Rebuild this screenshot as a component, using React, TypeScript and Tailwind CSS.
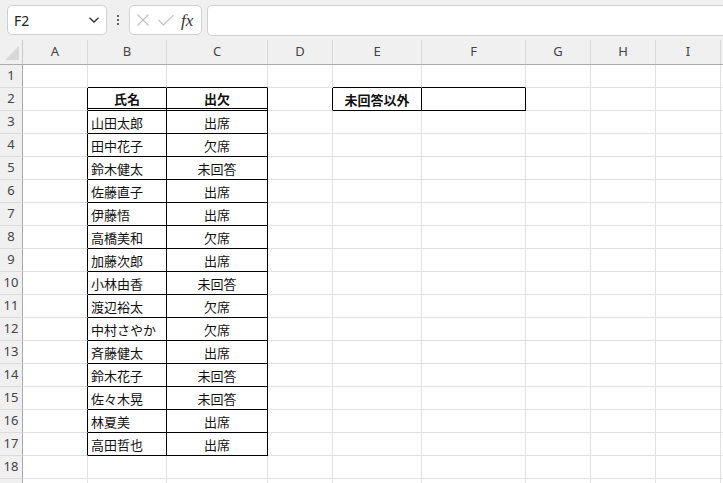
import React from "react";

const cols = [
  { l: "A", w: 65 },
  { l: "B", w: 79 },
  { l: "C", w: 101 },
  { l: "D", w: 65 },
  { l: "E", w: 89 },
  { l: "F", w: 104 },
  { l: "G", w: 65 },
  { l: "H", w: 65 },
  { l: "I", w: 65 },
  { l: "", w: 65 },
];

const data: [string, string][] = [
  ["山田太郎", "出席"],
  ["田中花子", "欠席"],
  ["鈴木健太", "未回答"],
  ["佐藤直子", "出席"],
  ["伊藤悟", "出席"],
  ["高橋美和", "欠席"],
  ["加藤次郎", "出席"],
  ["小林由香", "未回答"],
  ["渡辺裕太", "欠席"],
  ["中村さやか", "欠席"],
  ["斉藤健太", "出席"],
  ["鈴木花子", "未回答"],
  ["佐々木晃", "未回答"],
  ["林夏美", "出席"],
  ["高田哲也", "出席"],
];

const jp = { fontFamily: '"Noto Sans CJK JP", "Noto Sans", sans-serif' };
const ui = { fontFamily: '"Noto Sans", "Liberation Sans", sans-serif' };

function cellContent(r: number, c: number): { text: string; bold?: boolean; align: "left" | "center" } | null {
  if (r === 2 && c === 1) return { text: "氏名", bold: true, align: "center" };
  if (r === 2 && c === 2) return { text: "出欠", bold: true, align: "center" };
  if (r === 2 && c === 4) return { text: "未回答以外", bold: true, align: "center" };
  if (r >= 3 && r <= 17) {
    const d = data[r - 3];
    if (c === 1) return { text: d[0], align: "left" };
    if (c === 2) return { text: d[1], align: "center" };
  }
  return null;
}

function rightBlack(r: number, c: number) {
  if (r >= 2 && r <= 17 && c >= 0 && c <= 2) return true;
  if (r === 2 && c >= 3 && c <= 5) return true;
  return false;
}
function bottomBlack(r: number, c: number) {
  if (r === 1 && (c === 1 || c === 2 || c === 4 || c === 5)) return true;
  if (r >= 2 && r <= 17 && (c === 1 || c === 2)) return true;
  if (r === 2 && (c === 4 || c === 5)) return true;
  return false;
}

function Cell({ r, c, w }: { r: number; c: number; w: number }) {
  const content = cellContent(r, c);
  const rb = rightBlack(r, c);
  const bb = bottomBlack(r, c);
  const dbl = r === 2 && (c === 1 || c === 2);
  const cls = [
    "shrink-0 box-border h-full flex items-center overflow-hidden whitespace-nowrap text-[13px] text-[#111]",
    rb ? "border-r border-r-black" : "border-r border-r-[#e1e1e1]",
    dbl
      ? "border-b-[3px] border-double border-b-black"
      : bb
      ? "border-b border-b-black"
      : "border-b border-b-[#e1e1e1]",
    content?.align === "center" ? "justify-center" : "justify-start pl-[3px]",
    content?.bold ? "font-bold" : "font-normal",
  ].join(" ");
  return (
    <div className={cls} style={{ width: w }}>
      {content && <span className="pt-[1px]" style={jp}>{content.text}</span>}
    </div>
  );
}

export default function App() {
  const rows = Array.from({ length: 19 }, (_, i) => i + 1);
  return (
    <div className="w-[723px] h-[483px] overflow-hidden bg-white relative" style={ui}>
      {/* toolbar */}
      <div className="h-[40px] bg-[#f0f0f0] flex items-center">
        <div className="shrink-0 ml-[7px] w-[100px] h-[30px] bg-white border border-[#d1d1d1] rounded-[5px] flex items-center justify-between pl-[6px] pr-[6px] box-border">
          <span className="text-[14px] text-[#222]">F2</span>
          <svg width="12" height="8" viewBox="0 0 12 8">
            <path d="M1.5 1.8 L6 6 L10.5 1.8" fill="none" stroke="#333" strokeWidth="1.3" />
          </svg>
        </div>
        <div className="shrink-0 w-[22px] flex flex-col items-center justify-center gap-[2px]">
          <div className="w-[2px] h-[2px] bg-[#333] rounded-full" />
          <div className="w-[2px] h-[2px] bg-[#333] rounded-full" />
          <div className="w-[2px] h-[2px] bg-[#333] rounded-full" />
        </div>
        <div className="shrink-0 w-[73px] h-[30px] bg-white border border-[#d1d1d1] rounded-[5px] flex items-center box-border pl-[4px]">
          <svg width="16" height="16" viewBox="0 0 16 16" className="ml-[1px]">
            <path d="M2.5 2.5 L13.5 13.5 M13.5 2.5 L2.5 13.5" stroke="#c2c2c2" strokeWidth="1.2" fill="none" />
          </svg>
          <svg width="18" height="16" viewBox="0 0 18 16" className="ml-[6px]">
            <path d="M1.5 8 L6.5 13 L16.5 3" stroke="#c2c2c2" strokeWidth="1.2" fill="none" />
          </svg>
          <span
            className="ml-[6px] italic text-[17px] text-[#333] leading-none"
            style={{ fontFamily: '"Liberation Serif", "DejaVu Serif", serif' }}
          >
            fx
          </span>
        </div>
        <div className="ml-[5px] flex-1 h-[31px] bg-white border-t border-b border-l border-[#d1d1d1] rounded-l-[5px] box-border" />
      </div>
      {/* column header */}
      <div className="flex h-[25px] bg-[#f0f0f0] border-b border-[#ababab] box-border">
        <div className="w-[23px] shrink-0 h-full border-r border-[#c8c8c8] box-border relative">
          <svg width="16" height="16" viewBox="0 0 16 16" className="absolute left-[4px] bottom-[3px]">
            <polygon points="15,1 15,15 1,15" fill="#d8d8d8" />
          </svg>
        </div>
        {cols.map((c, i) => (
          <div
            key={i}
            className="shrink-0 h-full flex items-center justify-center border-r border-[#d9d9d9] box-border text-[13px] text-[#444]"
            style={{ width: c.w }}
          >
            {c.l}
          </div>
        ))}
      </div>
      {/* rows */}
      {rows.map((r) => (
        <div key={r} className="flex h-[23px]">
          <div className="w-[23px] shrink-0 h-full bg-[#f0f0f0] border-r border-r-[#ababab] border-b border-b-[#dcdcdc] box-border flex items-center justify-center text-[13px] text-[#444]">
            {r <= 18 ? r : ""}
          </div>
          {cols.map((c, ci) => (
            <Cell key={ci} r={r} c={ci} w={c.w} />
          ))}
        </div>
      ))}
    </div>
  );
}
